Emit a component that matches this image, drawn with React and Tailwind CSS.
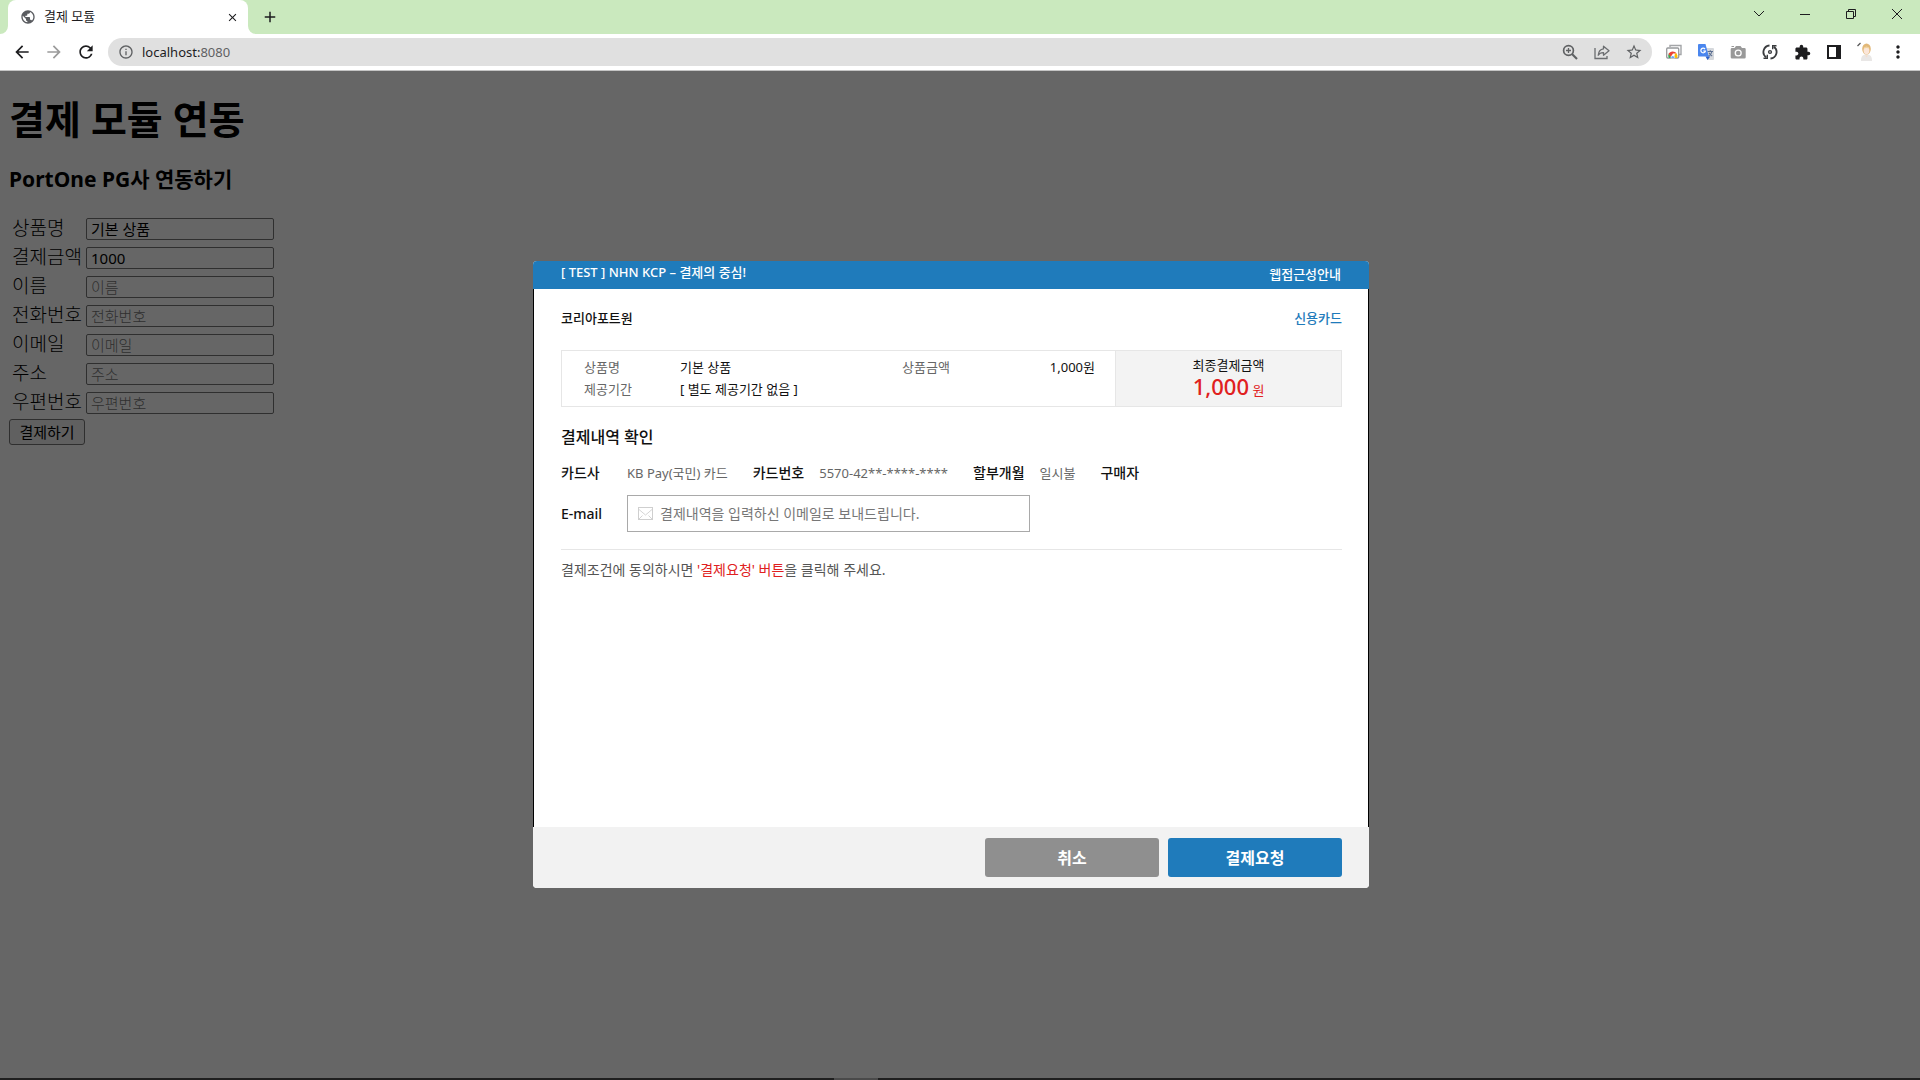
import { useState } from "react";
import {
  MdArrowBack,
  MdArrowForward,
  MdRefresh,
  MdInfoOutline,
  MdStarOutline,
  MdExtension,
  MdMoreVert,
  MdPublic,
  MdClose,
  MdAdd,
} from "react-icons/md";

const fields = [
  { id: "productName", label: "상품명", value: "기본 상품" },
  { id: "amount", label: "결제금액", value: "1000" },
  { id: "buyerName", label: "이름", value: "" },
  { id: "buyerTel", label: "전화번호", value: "" },
  { id: "buyerEmail", label: "이메일", value: "" },
  { id: "buyerAddr", label: "주소", value: "" },
  { id: "buyerPostcode", label: "우편번호", value: "" },
];

function ZoomIcon() {
  return (
    <svg width="16" height="16" viewBox="0 0 16 16" fill="none" stroke="#5f6163" strokeWidth="1.7">
      <circle cx="6.500" cy="6.500" r="4.900" />
      <path d="M10 10l5 5" strokeWidth="2.100" />
      <path d="M6.500 4v5M4 6.500h5" strokeWidth="1.300" />
    </svg>
  );
}

function ShareIcon() {
  return (
    <svg width="16" height="16" viewBox="0 0 16 16" fill="none" stroke="#6b6d70" strokeWidth="1.3">
      <path d="M1 4v10.500h12V12" />
      <path d="M9.500 2.200 15 6.800l-5.500 4.400V8.600C7.200 8.500 5.400 9.300 4.200 11.200 4.500 7.700 6.500 5.200 9.500 4.800z" strokeLinejoin="round" />
    </svg>
  );
}

function TabsIcon() {
  return (
    <svg width="16" height="16" viewBox="0 0 16 16">
      <path d="M4 3V1.500h11v9H13" fill="none" stroke="#a3a5a8" strokeWidth="1.400" />
      <rect x="0.700" y="4" width="12" height="10" rx="1" fill="#fff" stroke="#97999c" strokeWidth="1.300" />
      <path d="M3 14a4.400 4.400 0 0 1-.3-4.500L5.800 14z" fill="#34a853" />
      <path d="M2.500 10a4.800 4.800 0 0 1 8.300-.4H7L4.800 12.800z" fill="#ea4335" />
      <path d="M10.600 9.600a4.500 4.500 0 0 1 .4 4.400H8l1-4.400z" fill="#fbbc04" />
      <path d="M4.800 14a2 2 0 1 1 4 0z" fill="#4285f4" stroke="#fff" strokeWidth="0.500" />
    </svg>
  );
}

function TranslateIcon() {
  return (
    <svg width="16" height="16" viewBox="0 0 16 16">
      <path d="M6 4h9a1 1 0 0 1 1 1v10a1 1 0 0 1-1 1H9.500z" fill="#d5d8dc" />
      <path d="M9.500 7.500h5.500M12.300 6.200v1.300M14 7.500c-.4 2-1.900 3.500-3.500 4.500M11 8.700c.6 1.300 1.600 2.400 3.200 3.300" fill="none" stroke="#5d7092" strokeWidth="1.100" />
      <path d="M1 0h6.500l3.300 12.500H1a1 1 0 0 1-1-1V1a1 1 0 0 1 1-1z" fill="#4a86ee" />
      <path d="m7.500 12.500 2 3.500 2.800-3.500z" fill="#2a5fc9" />
      <path d="M7 5.100A2.300 2.300 0 1 0 7.400 7H5.200" fill="none" stroke="#fff" strokeWidth="1.200" />
    </svg>
  );
}

function CameraIcon() {
  return (
    <svg width="16" height="16" viewBox="0 0 16 16">
      <path d="M2 4h2.500L6 2h4.500L12 4h2.500A1.300 1.300 0 0 1 15.700 5.300v8a1.300 1.300 0 0 1-1.300 1.300H2a1.300 1.300 0 0 1-1.300-1.300v-8A1.300 1.300 0 0 1 2 4z" fill="#999" />
      <circle cx="8.200" cy="9" r="3.600" fill="#fff" />
      <circle cx="8.200" cy="9" r="2.300" fill="#999" />
      <path d="M1.500 2.500h2.500" stroke="#999" />
    </svg>
  );
}

function SyncIcon() {
  return (
    <svg width="16" height="16" viewBox="0 0 16 16" fill="none" stroke="#3a3c3f" strokeWidth="1.800">
      <path d="M7.500 1.500A6.500 6.500 0 0 0 4.200 13.300" />
      <path d="M8.500 14.500A6.500 6.500 0 0 0 11.800 2.700" />
      <path d="M1.500 14.200h3.800v-3.500M14.500 1.800h-3.800v3.500" strokeWidth="1.400" />
      <circle cx="8" cy="8" r="1.400" strokeWidth="1.400" />
    </svg>
  );
}

function PanelIcon() {
  return (
    <svg width="14" height="14" viewBox="0 0 14 14">
      <rect width="14" height="14" fill="#1d1d1f" />
      <rect x="2" y="2" width="7" height="10" fill="#fff" />
    </svg>
  );
}

function AvatarIcon() {
  return (
    <svg width="18" height="20" viewBox="0 0 18 20">
      <path d="M4 19c0-4 1-6.500 5.500-6.500S15 15 15 19z" fill="#e9e7e6" />
      <ellipse cx="9.500" cy="7" rx="4.300" ry="5.500" fill="#e2b878" />
      <ellipse cx="9.500" cy="8.500" rx="2.900" ry="3.800" fill="#fbe6d9" />
      <path d="M6.500 6.500c1-2 4.500-2.500 6 0-2-.8-4-.8-6 0z" fill="#f1d39b" />
      <path d="M8 13.500h3l-1.500 2z" fill="#f6dccc" />
      <path d="m.5 4 3-3" stroke="#555" strokeWidth="1.200" />
    </svg>
  );
}

const toolbarIcons = [
  { name: "탭 캡처", icon: <TabsIcon /> },
  { name: "번역", icon: <TranslateIcon /> },
  { name: "스크린샷", icon: <CameraIcon /> },
  { name: "동기화", icon: <SyncIcon /> },
  { name: "확장 프로그램", icon: <MdExtension size={17} className="text-[#1d1d1f]" /> },
  { name: "측면 패널", icon: <PanelIcon /> },
  { name: "프로필", icon: <AvatarIcon /> },
  { name: "메뉴", icon: <MdMoreVert size={20} className="text-[#1d1d1f]" /> },
];

const windowIcons = [
  { name: "탭 검색", d: "M1 3l5 5 5-5" },
  { name: "최소화", d: "M1 6.500h10" },
  { name: "이전 크기로", d: "M1.500 3.500h7v7h-7zM3.500 3.500v-2h7v7h-2" },
  { name: "닫기", d: "M1 1l10 10M11 1L1 11" },
];

function BrowserBar() {
  return (
    <header className="text-[#1d1d1f]">
      <div className="flex h-[34px] items-end bg-[#cae9be]">
        <svg className="h-2 w-2" viewBox="0 0 8 8">
          <path d="M8 0v8H0a8 8 0 0 0 8-8z" fill="#fff" />
        </svg>
        <div className="flex h-full w-60 items-center rounded-t-lg bg-white pr-2 pl-3">
          <MdPublic size={16} className="text-[#5a5c60]" />
          <span className="flex-1 pl-2 text-[13px]">결제 모듈</span>
          <button type="button" aria-label="탭 닫기" className="flex h-4 w-4 items-center justify-center">
            <MdClose size={13} />
          </button>
        </div>
        <svg className="h-2 w-2" viewBox="0 0 8 8">
          <path d="M0 0v8h8a8 8 0 0 1-8-8z" fill="#fff" />
        </svg>
        <button type="button" aria-label="새 탭" className="flex h-full w-7 items-center justify-center">
          <MdAdd size={18} />
        </button>
        <div className="ml-auto flex self-start">
          {windowIcons.map((item) => (
            <button key={item.name} type="button" aria-label={item.name} className="flex h-7 w-[46px] items-center justify-center">
              <svg width="12" height="12" viewBox="0 0 12 12" fill="none" stroke="#1d1d1f">
                <path d={item.d} />
              </svg>
            </button>
          ))}
        </div>
      </div>
      <div className="flex h-[37px] items-center border-b border-[#c4c4c4] bg-white px-[6px]">
        <button type="button" aria-label="뒤로" className="flex w-8 justify-center">
          <MdArrowBack size={20} />
        </button>
        <button type="button" aria-label="앞으로" className="flex w-8 justify-center text-[#9b9b9b]">
          <MdArrowForward size={20} />
        </button>
        <button type="button" aria-label="새로고침" className="flex w-8 justify-center">
          <MdRefresh size={20} />
        </button>
        <div className="mx-[6px] flex h-7 flex-1 items-center rounded-full bg-[#e0e0e0] pr-[2px] pl-[10px] text-[#5f6163]">
          <MdInfoOutline size={16} />
          <span className="flex-1 pt-px pl-2 text-[13px]">
            <span className="text-[#1d1d1f]">localhost:</span>8080
          </span>
          <button type="button" aria-label="확대/축소" className="flex w-8 justify-center">
            <ZoomIcon />
          </button>
          <button type="button" aria-label="공유" className="flex w-8 justify-center">
            <ShareIcon />
          </button>
          <button type="button" aria-label="북마크" className="flex w-8 justify-center">
            <MdStarOutline size={18} />
          </button>
        </div>
        {toolbarIcons.map((item) => (
          <button key={item.name} type="button" aria-label={item.name} className="flex w-8 justify-center">
            {item.icon}
          </button>
        ))}
      </div>
    </header>
  );
}

function OrderForm() {
  const [values, setValues] = useState(
    Object.fromEntries(fields.map((field) => [field.id, field.value]))
  );

  const handleChange = (e) => {
    setValues({ ...values, [e.target.id]: e.target.value });
  };

  return (
    <main className="px-[9px] pt-6 text-black">
      <h1 className="text-[39px] leading-[48px] font-bold">결제 모듈 연동</h1>
      <h3 className="mt-5 text-[21px] leading-8 font-bold">PortOne PG사 연동하기</h3>
      <form className="mt-[23px]" onSubmit={(e) => e.preventDefault()}>
        <div className="flex flex-col gap-[7px]">
          {fields.map((field) => (
            <div key={field.id} className="flex items-start">
              <label htmlFor={field.id} className="w-[77px] pl-[3px] text-[19px] leading-5 font-light whitespace-nowrap">
                {field.label}
              </label>
              <input
                id={field.id}
                type="text"
                value={values[field.id]}
                placeholder={field.label}
                onChange={handleChange}
                className="h-[22px] w-[188px] rounded-[2px] border border-[#767676] bg-white px-1 text-[15px] placeholder:font-light placeholder:text-[#757575]"
              />
            </div>
          ))}
        </div>
        <button
          type="submit"
          className="mt-[5px] flex h-[26px] w-[76px] items-center justify-center rounded-[3px] border border-[#767676] bg-[#efefef] text-[15px]"
        >
          결제하기
        </button>
      </form>
    </main>
  );
}

function PaymentModal() {
  const [email, setEmail] = useState("");

  return (
    <div
      role="dialog"
      aria-label="NHN KCP"
      className="flex h-[627px] w-[836px] flex-col overflow-hidden rounded bg-white text-[13px] text-[#111]"
    >
      <div className="flex h-7 items-center justify-between bg-[#1f7bbb] px-7 font-medium text-white">
        <span className="pb-1">[ TEST ] NHN KCP – 결제의 중심!</span>
        <a href="#accessibility">웹접근성안내</a>
      </div>

      <div className="flex-1 border-x border-black pt-[19px] pr-[26px] pl-[27px]">
        <div className="flex justify-between leading-5 font-medium">
          <span>코리아포트원</span>
          <span className="text-[#1f7bbb]">신용카드</span>
        </div>

        <div className="mt-[22px] flex h-[57px] border border-[#e6e6e6]">
          <dl className="grid flex-1 grid-cols-[96px_222px_1fr_auto] content-start pt-[5px] pr-5 pl-[22px] leading-[22px]">
            <dt className="text-[#666]">상품명</dt>
            <dd>기본 상품</dd>
            <dt className="text-[#666]">상품금액</dt>
            <dd>1,000원</dd>
            <dt className="text-[#666]">제공기간</dt>
            <dd>[ 별도 제공기간 없음 ]</dd>
          </dl>
          <div className="flex w-[226px] flex-col items-center border-l border-[#e6e6e6] bg-[#f3f3f3] pt-1">
            <span className="leading-5">최종결제금액</span>
            <span className="leading-[22px] text-[#e02020]">
              <strong className="text-[22px] font-medium">1,000</strong> 원
            </span>
          </div>
        </div>

        <h2 className="mt-[18px] text-base leading-6 font-medium">결제내역 확인</h2>
        <div className="mt-3 flex text-[13px] leading-6 text-[#666]">
          <span className="w-[66px] text-sm leading-6 font-medium text-[#111]">카드사</span>
          <span>KB Pay(국민) 카드</span>
          <span className="ml-[25px] text-sm leading-6 font-medium text-[#111]">카드번호</span>
          <span className="ml-[15px]">5570-42**-****-****</span>
          <span className="ml-[25px] text-sm leading-6 font-medium text-[#111]">할부개월</span>
          <span className="ml-[15px]">일시불</span>
          <span className="ml-[25px] text-sm leading-6 font-medium text-[#111]">구매자</span>
        </div>
        <div className="mt-[10px] flex items-center">
          <label htmlFor="receiptEmail" className="w-[66px] text-sm font-medium">
            E-mail
          </label>
          <div className="flex h-[37px] w-[403px] items-center border border-[#a9a9a9] px-[10px]">
            <svg width="15" height="13" viewBox="0 0 15 13" fill="none" stroke="#cfcfcf">
              <rect x="0.500" y="0.500" width="14" height="12" />
              <path d="M1 2.500l6.500 5.500L14 2.500M1 12l3.500-3.500M14 12l-3.500-3.500" strokeWidth="0.900" />
            </svg>
            <input
              id="receiptEmail"
              type="email"
              value={email}
              onChange={(e) => setEmail(e.target.value)}
              placeholder="결제내역을 입력하신 이메일로 보내드립니다."
              className="ml-[7px] flex-1 text-sm outline-none placeholder:text-[#777]"
            />
          </div>
        </div>
        <hr className="mt-[17px] border-[#e6e6e6]" />
        <p className="mt-2 text-sm leading-6 text-[#555]">
          결제조건에 동의하시면 <span className="text-[#e02020]">'결제요청' 버튼</span>을 클릭해 주세요.
        </p>
      </div>

      <div className="flex h-[61px] items-center justify-end gap-[9px] bg-[#f2f2f2] px-[27px] text-base font-bold text-white">
        <button type="button" className="h-[39px] w-[174px] rounded-[3px] bg-[#8f8f8f]">
          취소
        </button>
        <button type="button" className="h-[39px] w-[174px] rounded-[3px] bg-[#1f7bbb]">
          결제요청
        </button>
      </div>
    </div>
  );
}

export default function App() {
  return (
    <div className="flex min-h-screen flex-col bg-white font-['Noto_Sans','Noto_Sans_CJK_KR',sans-serif]">
      <BrowserBar />
      <div className="relative flex-1">
        <OrderForm />
        <div className="absolute inset-0 flex items-center justify-center bg-black/60 pr-[18px]">
          <PaymentModal />
        </div>
      </div>
      <div className="flex h-[2px] justify-center bg-[#1f1f1f] pr-[209px]">
        <div className="w-11 bg-[#4a4a4a]" />
      </div>
    </div>
  );
}
